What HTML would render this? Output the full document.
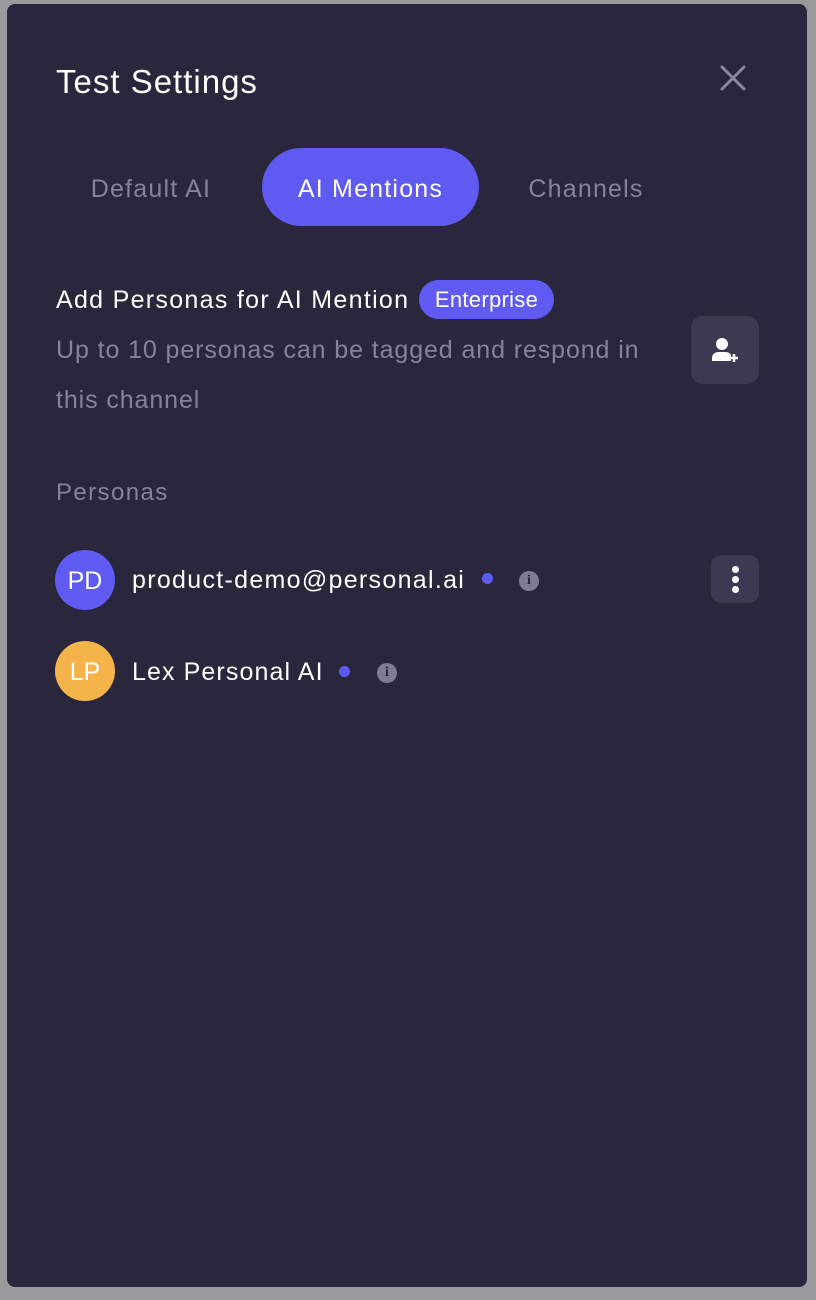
<!DOCTYPE html>
<html><head><style>
html,body{margin:0;padding:0}
body{width:816px;height:1300px;background:#9a9a9c;position:relative;overflow:hidden;font-family:"Liberation Sans",sans-serif;letter-spacing:1.2px}
.m{position:absolute;left:7px;top:4px;width:800px;height:1283px;background:#2a273d;border-radius:8px}
.a{position:absolute;white-space:nowrap}
.tab{position:absolute;top:148px;height:78px;line-height:82px;font-size:25px;color:#85839a;text-align:center}
.av{position:absolute;left:55px;width:60px;height:60px;border-radius:50%;color:#fff;font-size:25px;line-height:62px;text-align:center;letter-spacing:0}
.dot{position:absolute;width:11px;height:11px;border-radius:50%;background:#5f5bf2}
.info{position:absolute;width:20px;height:20px;border-radius:50%;background:#7e7c92;color:#2a273d;font-size:14px;font-weight:bold;line-height:20px;text-align:center;font-family:"Liberation Serif",serif;letter-spacing:0}
</style></head><body>
<div class="m"></div>
<div class="a" style="left:56px;top:62px;font-size:33px;color:#fff;line-height:40px;letter-spacing:1px">Test Settings</div>
<svg class="a" style="left:720px;top:65px" width="26" height="26" viewBox="0 0 26 26"><path d="M2 2L24 24M24 2L2 24" stroke="#8a889d" stroke-width="3" stroke-linecap="round"/></svg>
<div class="tab" style="left:62px;width:178px">Default AI</div>
<div class="tab" style="left:262px;width:217px;background:#5f5bf2;border-radius:39px;color:#fff">AI Mentions</div>
<div class="tab" style="left:500px;width:172px">Channels</div>
<div class="a" style="left:56px;top:284px;font-size:25px;color:#fff;line-height:32px;letter-spacing:1.3px">Add Personas for AI Mention</div>
<div class="a" style="left:419px;top:280px;width:135px;height:39px;background:#5f5bf2;border-radius:20px;color:#fff;font-size:22px;line-height:40px;text-align:center;letter-spacing:0.3px">Enterprise</div>
<div class="a" style="left:56px;top:325px;font-size:25px;color:#85839a;line-height:50px;white-space:normal;width:605px;letter-spacing:0.9px">Up to 10 personas can be tagged and respond in this channel</div>
<div class="a" style="left:691px;top:316px;width:68px;height:68px;background:#3c3a52;border-radius:12px"></div>
<svg class="a" style="left:710px;top:337px" width="30" height="26" viewBox="0 0 30 26"><circle cx="12" cy="7" r="6" fill="#fff"/><path d="M2 24v-3c0-4 3-6 7-6h6c3 0 5 1 6 3v6z" fill="#fff"/><path d="M24 17v8M20 21h8" stroke="#fff" stroke-width="2.5"/></svg>
<div class="a" style="left:56px;top:478px;font-size:24px;color:#85839a;line-height:30px;letter-spacing:1.4px">Personas</div>
<div class="av" style="top:550px;background:#5f5bf2">PD</div>
<div class="a" style="left:132px;top:564px;font-size:25px;color:#fff;line-height:32px;letter-spacing:1.3px">product-demo@personal.ai</div>
<div class="dot" style="left:482px;top:573px"></div>
<div class="info" style="left:519px;top:571px">i</div>
<div class="a" style="left:711px;top:555px;width:48px;height:48px;background:#3c3a52;border-radius:10px"></div>
<div class="a" style="left:732px;top:566px;width:7px;height:7px;border-radius:50%;background:#fff"></div>
<div class="a" style="left:732px;top:576px;width:7px;height:7px;border-radius:50%;background:#fff"></div>
<div class="a" style="left:732px;top:586px;width:7px;height:7px;border-radius:50%;background:#fff"></div>
<div class="av" style="top:641px;background:#f4b44a">LP</div>
<div class="a" style="left:132px;top:656px;font-size:25px;color:#fff;line-height:32px;letter-spacing:1.1px">Lex Personal AI</div>
<div class="dot" style="left:339px;top:666px"></div>
<div class="info" style="left:377px;top:663px">i</div>
</body></html>
